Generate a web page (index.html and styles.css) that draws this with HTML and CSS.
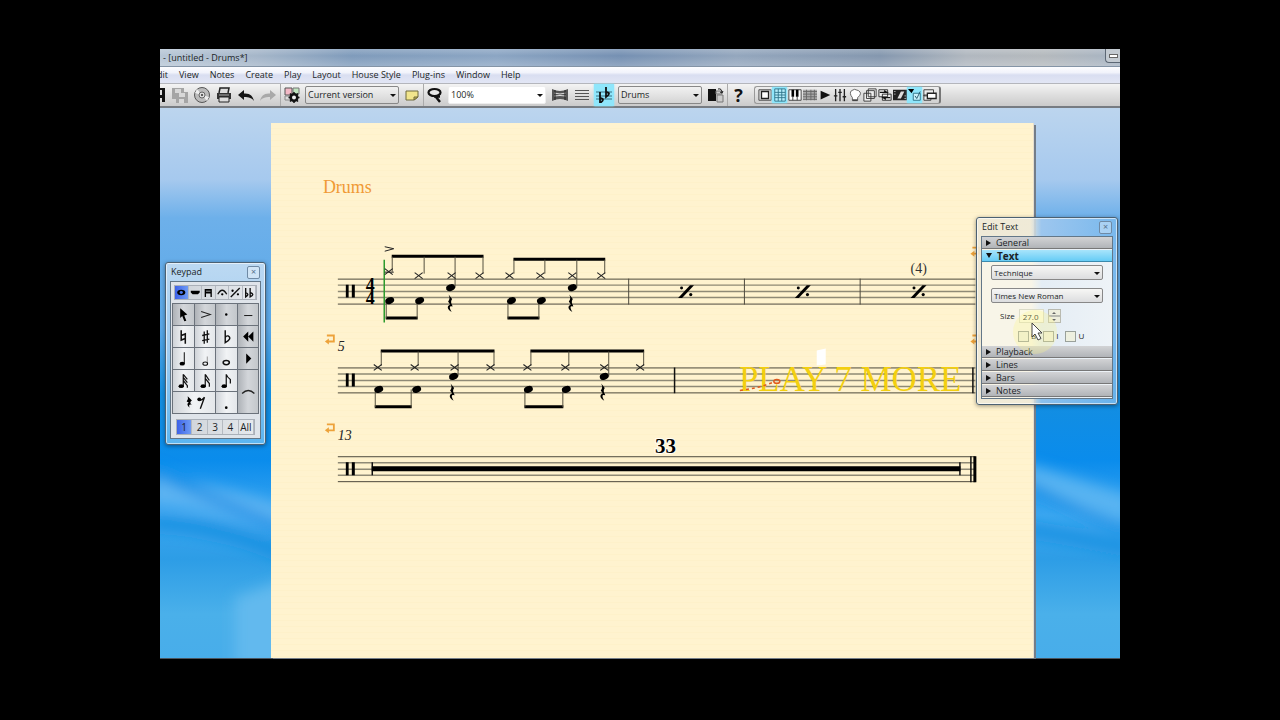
FILE: index.html
```html
<!DOCTYPE html>
<html lang="en">
<head>
<meta charset="utf-8">
<title>[untitled - Drums*]</title>
<link rel="stylesheet" href="styles.css">
</head>
<body>
<svg class="defs" aria-hidden="true">
  <defs>
    <g id="x"><path d="M-4-3 4 3M-4 3 4-3" stroke="#222" stroke-width="1.1" fill="none"/></g>
    <g id="head"><ellipse rx="4.6" ry="3.3" transform="rotate(-22)"/></g>
    <g id="rest"><path d="M-2-9 1.500-4.500Q-.5-1.500 1.500 1.500L2 3Q-3 1.500 1 8.500-4 5.500-2.500 2.500L-.5 1-2.500-2Q0-4.500-2-9Z"/></g>
    <g id="repeat"><path d="M-8 6.500h4L8-6.500H4Z"/><circle cx="-4.500" cy="-3.500" r="1.500"/><circle cx="4.700" cy="3" r="1.600"/></g>
    <g id="clef"><path d="M0 0h2.800v13H0zM6 0h3v13H6z"/></g>
    <g id="break"><path d="M2 1h7v6H3" fill="none" stroke="#eda23a" stroke-width="1.800"/><path d="M0 7l4-3v6z" fill="#eda23a"/></g>
  </defs>
</svg>

<div class="app">
  <header class="titlebar">
    <span>- [untitled - Drums*]</span>
    <button class="minimise" aria-label="Minimise"><i></i></button>
  </header>

  <nav class="menubar">
    <button class="cut">Edit</button><button>View</button><button>Notes</button><button>Create</button><button>Play</button><button>Layout</button><button>House Style</button><button>Plug-ins</button><button>Window</button><button>Help</button>
  </nav>

  <div class="toolbar">
    <div class="group files">
      <button class="half" aria-label="Save"><svg viewBox="0 0 6 16" width="6" height="16"><path d="M0 1h5v14H0z" fill="#111"/><path d="M0 3h2v5H0zM0 11h2v4H0z" fill="#ddd"/></svg></button>
      <button aria-label="Save all"><svg viewBox="0 0 16 16"><path d="M0 1h12v11H0zM4 5h12v11H4z" fill="#a5a5a5"/><path d="M3 2h6v4H3zM7 6h6v4H7zM7 12h5v4H7z" fill="#d8d8d8"/></svg></button>
      <button aria-label="Export audio"><svg viewBox="0 0 16 16"><circle cx="8" cy="8" r="7.500" fill="#bbb" stroke="#555"/><path d="M8 8 3 2 1 6zM8 8l5 6 2-4z" fill="#eee"/><circle cx="8" cy="8" r="3" fill="#ddd" stroke="#666"/><circle cx="8" cy="8" r="1" fill="#333"/></svg></button>
      <button aria-label="Print"><svg viewBox="0 0 16 16"><path d="M3 6 4 1h9l-1 5" fill="#ddd" stroke="#222" stroke-width="1.500"/><path d="M1 6h14v6H1z" fill="#333"/><path d="M3 10h10v5H3z" fill="#ddd" stroke="#222"/><path d="M3 8h10" stroke="#aaa"/></svg></button>
      <button aria-label="Undo"><svg viewBox="0 0 16 16"><path d="M0 8l6-5v3.500c6-.5 9 2.500 10 7.500-2-3-5-4-10-4V13z" fill="#151515"/></svg></button>
      <button aria-label="Redo"><svg viewBox="0 0 16 16"><path d="M16 8l-6-5v3.500C4 6 1 9 0 14c2-3 5-4 10-4V13z" fill="#a9a9a9"/></svg></button>
    </div>
    <div class="group">
      <button aria-label="New version"><svg viewBox="0 0 16 16"><path d="M1 1h7v7H1z" fill="#f3b9c6" stroke="#555"/><path d="M9 1h6v6H9z" fill="#bfe3be" stroke="#777"/><path d="M1 9h6v4H1z" fill="#ddd" stroke="#888"/><circle cx="10" cy="10.500" r="3.300" fill="#eee" stroke="#111" stroke-width="2.600"/><path d="M10 5v2M10 14v2M4.500 10.500h2M13.500 10.500h2M6 6.500l1.500 1.500M14 14.500l-1.500-1.500M14 6.500 12.500 8M6 14.500l1.500-1.500" stroke="#111" stroke-width="1.500"/></svg></button>
      <span class="drop version"><select aria-label="Version"><option>Current version</option></select></span>
      <button aria-label="Comment"><svg viewBox="0 0 16 16"><path d="M2 4h12v6l-4 3H2z" fill="#f1e58c" stroke="#6f6a3c"/><path d="M14 10h-4v3z" fill="#c9b84e" stroke="#6f6a3c"/></svg></button>
    </div>
    <div class="group">
      <button aria-label="Zoom tool"><svg viewBox="0 0 16 16"><ellipse cx="7.500" cy="5.500" rx="6" ry="3.500" fill="#e8e8e8" stroke="#111" stroke-width="2.200"/><path d="M7 9.500h6M9 10l4 5" stroke="#111" stroke-width="2.500"/></svg></button>
      <span class="drop zoom"><select aria-label="Zoom"><option>100%</option></select></span>
    </div>
    <div class="group views">
      <button aria-label="Panorama"><svg viewBox="0 0 16 16"><path d="M0 2q8 4 16 0v12q-8-4-16 0z" fill="#555"/><path d="M2 6q6 2 12 0M2 9q6-1 12 0" stroke="#ddd" fill="none"/><path d="M3 3v10M13 3v10" stroke="#222"/></svg></button>
      <button aria-label="Staves"><svg viewBox="0 0 16 16"><path d="M1 3.500h14M1 6.500h14M1 9.500h14M1 12.500h14" stroke="#555"/></svg></button>
      <button class="on transpose" aria-label="Transposing score"><svg viewBox="0 0 16 16"><path d="M0 5h16M0 9h16M0 12h16" stroke="#397182"/><path d="M4 5v11q6-4 0-5M10 0v10q6-4 0-5" fill="none" stroke="#111" stroke-width="1.800"/></svg></button>
      <span class="drop part"><select aria-label="Part"><option>Drums</option></select></span>
      <button aria-label="Switch part"><svg viewBox="0 0 16 16"><path d="M0 2h8v12H0z" fill="#111"/><path d="M8 4h6v3H8zM9 8h6v7H9z" fill="#ccc" stroke="#777"/><path d="M10 2q4-1 4 4l-2-1m2 1 1-2" fill="none" stroke="#222"/></svg></button>
    </div>
    <div class="group">
      <button class="help" aria-label="Help">?</button>
      <div class="windows">
        <button aria-label="Navigator"><svg viewBox="0 0 16 16"><path d="M1 2h14v12H1z" fill="#ddd" stroke="#444"/><path d="M4 4h8v8H4z" fill="#fff" stroke="#222" stroke-width="1.500"/></svg></button>
        <button class="on" aria-label="Keypad window"><svg viewBox="0 0 16 16"><path d="M2 1h12v14H2zM6 1v14M10 1v14M2 5h12M2 8h12M2 11h12" fill="#b5eefb" stroke="#2c7288"/></svg></button>
        <button aria-label="Keyboard"><svg viewBox="0 0 16 16"><path d="M1 2h14v12H1z" fill="#fff" stroke="#333"/><path d="M4 2h3v8H4zM9 2h3v8H9z"/><path d="M5.500 9v5M10.500 9v5" stroke="#333"/></svg></button>
        <button aria-label="Fretboard"><svg viewBox="0 0 16 16"><path d="M0 2h16v12H0z" fill="#aaa"/><path d="M0 4h16M0 7h16M0 10h16M0 13h16M4 2v12M9 2v12M13 2v12" stroke="#666"/></svg></button>
        <button aria-label="Playback"><svg viewBox="0 0 16 16"><path d="M3 3l11 5-11 5z" fill="#111"/></svg></button>
        <button aria-label="Mixer"><svg viewBox="0 0 16 16"><path d="M3 1v14M8 1v14M13 1v14M1 9h4M6 5h4M11 10h4" stroke="#222" stroke-width="1.500"/></svg></button>
        <button aria-label="Ideas"><svg viewBox="0 0 16 16"><path d="M5 11Q1 6 4 3t8 0-1 8v3H5z" fill="#fff" stroke="#555"/><path d="M5 13h6v2H5z" fill="#444"/></svg></button>
        <button aria-label="Parts"><svg viewBox="0 0 16 16"><path d="M6 1h9v9H6zM4 3h9v9H4zM1 6h8v9H1z" fill="#eee" stroke="#333"/></svg></button>
        <button aria-label="Compare"><svg viewBox="0 0 16 16"><path d="M1 2h10v8H1zM5 7h10v7H5z" fill="#eee" stroke="#222"/><path d="M2 5h8l-3-2M14 11H6l3 2" stroke="#111" fill="none" stroke-width="1.500"/></svg></button>
        <button aria-label="Video"><svg viewBox="0 0 16 16"><path d="M0 2h16v12H0z" fill="#222"/><path d="M5 12 9 4h4l-4 8z" fill="#ddd"/><path d="M1 4h2M1 7h2M13 9h2M13 12h2" stroke="#aaa"/></svg></button>
        <button class="on" aria-label="Properties"><svg viewBox="0 0 16 16"><path d="M0 1h7L4 6z"/><path d="M6 6h8v8H6z" fill="#c9f3fd" stroke="#266a80"/><path d="M8 9l2 3 4-8" fill="none" stroke="#17485a"/></svg></button>
        <button aria-label="Hide windows"><svg viewBox="0 0 16 16"><path d="M1 2h11v7H1zM1 8h8v6H1z" fill="#eee" stroke="#333"/><path d="M5 6h10v6H5z" fill="#fff" stroke="#222" stroke-width="1.500"/></svg></button>
      </div>
    </div>
  </div>

  <main class="workspace">
    <svg class="wallpaper" viewBox="0 0 960 550" preserveAspectRatio="none" aria-hidden="true">
      <defs><filter id="soft" x="-20%" y="-50%" width="140%" height="200%"><feGaussianBlur stdDeviation="7"/></filter></defs>
      <g filter="url(#soft)" fill="none">
        <path d="M-10 384Q50 386 120 412" stroke="#5db4f2" stroke-width="26"/>
        <path d="M-10 362Q55 392 120 420" stroke="#168fe6" stroke-width="9"/>
        <path d="M-10 415Q60 417 125 446" stroke="#188ee0" stroke-width="12"/>
        <path d="M75 560V490L130 470V560z" fill="#62b9ee"/>
        <path d="M860 368Q910 382 970 402" stroke="#58b4f2" stroke-width="26"/>
        <path d="M860 372Q900 396 970 424" stroke="#178fe4" stroke-width="8"/>
        <path d="M860 420Q920 430 970 440" stroke="#188ee0" stroke-width="10"/>
      </g>
    </svg>

    <article class="paper">
      <svg class="score" viewBox="271 123 763 535" role="img" aria-label="Drum score">
        <text class="part-name" x="323" y="193">Drums</text>

        <g class="staff">
          <path d="M338 279.500H977M338 304.500H977"/>
          <path class="mid" d="M338 285.500H977M338 292H977M338 298H977"/>
          <path d="M629.500 279v26M745.500 279v26M861.500 279v26"/>
        </g>
        <use href="#clef" x="346" y="285"/>
        <text class="time" x="366" y="291">4</text>
        <text class="time" x="366" y="304">4</text>
        <path d="M384.500 260v63" stroke="#2c9a2c" stroke-width="1.500"/>
        <path d="M385 247l9 2-9 2.500" fill="none" stroke="#222"/>
        <path d="M392 255h92v3h-92zM514 258h92v3h-92zM386 317h32v3h-32zM508 317h32v3h-32z"/>
        <path class="stem" d="M392.500 257v15M424.500 257v17M455.500 257v31M483.500 257v17M514.500 260v14M545.500 260v14M577.500 260v28M605.500 260v14M386.500 301v18M417.500 301v18M508.500 301v18M539.500 301v18"/>
        <path d="M385 272.500h9" stroke="#222"/>
        <use href="#x" x="389" y="272"/><use href="#x" x="419" y="276"/><use href="#x" x="452" y="276"/><use href="#x" x="480" y="276"/>
        <use href="#x" x="510" y="276"/><use href="#x" x="541" y="276"/><use href="#x" x="573" y="276"/><use href="#x" x="602" y="276"/>
        <use href="#head" x="451" y="288"/><use href="#head" x="573" y="288"/>
        <use href="#head" x="390" y="301"/><use href="#head" x="420" y="301"/><use href="#head" x="512" y="301"/><use href="#head" x="542" y="301"/>
        <use href="#rest" x="451" y="304"/><use href="#rest" x="572" y="304"/>
        <use href="#repeat" x="687" y="292"/><use href="#repeat" x="804" y="292"/><use href="#repeat" x="920" y="292"/>
        <text class="count" x="912" y="273">(4)</text>
        <use href="#break" x="972" y="247"/>

        <use href="#break" x="325" y="335"/>
        <text class="bar-no" x="338" y="352">5</text>
        <g class="staff">
          <path d="M338 368.500H977M338 393.500H977"/>
          <path class="mid" d="M338 374.500H977M338 381H977M338 387H977"/>
          <path class="firm" d="M675.500 368v26M974.500 368v26"/>
        </g>
        <use href="#clef" x="346" y="374"/>
        <path d="M381 350h114v3H381zM531 350h114v3H531zM375 406h37v3h-37zM525 406h39v3h-39z"/>
        <path class="stem" d="M381.500 352v14M418.500 352v14M458.500 352v25M494.500 352v14M531.500 352v14M569.500 352v14M609.500 352v25M644.500 352v14M375.500 390v18M411.500 390v18M525.500 390v18M563.500 390v18"/>
        <use href="#x" x="378" y="368"/><use href="#x" x="415" y="368"/><use href="#x" x="455" y="368"/><use href="#x" x="491" y="368"/>
        <use href="#x" x="528" y="368"/><use href="#x" x="566" y="368"/><use href="#x" x="605" y="368"/><use href="#x" x="641" y="368"/>
        <use href="#head" x="454" y="377"/><use href="#head" x="605" y="377"/>
        <use href="#head" x="379" y="390"/><use href="#head" x="417" y="390"/><use href="#head" x="529" y="390"/><use href="#head" x="567" y="390"/>
        <use href="#rest" x="453" y="393"/><use href="#rest" x="604" y="393"/>
        <path d="M818 351l9-2v16l-9 1z" fill="#fff"/>
        <text class="technique" x="740" y="392">PLAY 7 MORE</text>
        <path d="M741 391q18-2 33-8" fill="none" stroke="#e05a1c" stroke-width="1.500" stroke-dasharray="3 3"/>
        <ellipse cx="778" cy="382" rx="3" ry="1.800" fill="none" stroke="#e05a1c" stroke-width="1.500"/>
        <use href="#break" x="972" y="335"/>

        <use href="#break" x="325" y="424"/>
        <text class="bar-no" x="338" y="441">13</text>
        <g class="staff">
          <path d="M338 457.500H977M338 482.500H977"/>
          <path class="mid" d="M338 463.500H977M338 470H977M338 476H977"/>
          <path class="firm" d="M372.500 463v13M961.500 463v13M972.500 457v26"/>
        </g>
        <use href="#clef" x="346" y="463"/>
        <path d="M372 467h590v5H372zM975 457h3v26h-3z"/>
        <text class="rests" x="656" y="454">33</text>
      </svg>
    </article>

    <section class="panel keypad" aria-label="Keypad">
      <header><h2>Keypad</h2><button class="close" aria-label="Close keypad">×</button></header>
      <div class="body">
        <div class="tabs">
          <button class="sel" aria-label="Common notes"><svg viewBox="0 0 14 12"><ellipse cx="7" cy="6" rx="4.500" ry="3"/><ellipse cx="7" cy="6" rx="1.800" ry="1.600" fill="#4c78ee"/></svg></button>
          <button aria-label="More notes"><svg viewBox="0 0 14 12"><path d="M2 4h10v2l-2 2H4L2 6z"/></svg></button>
          <button aria-label="Beams"><svg viewBox="0 0 14 12"><path d="M3 2h8v2H3zM3 5h8v2H3zM3 2h1.500v9H3zM9.500 2H11v9H9.500z"/></svg></button>
          <button aria-label="Articulations"><svg viewBox="0 0 14 12"><path d="M2 8q5-9 10 0" fill="none" stroke="#111" stroke-width="1.500"/><circle cx="7" cy="8" r="1.300"/></svg></button>
          <button aria-label="Jazz articulations"><svg viewBox="0 0 14 12"><path d="M2 11 12 1" stroke="#111" stroke-width="1.500"/><circle cx="4" cy="4" r="1.300"/><circle cx="10" cy="8" r="1.300"/></svg></button>
          <button aria-label="Accidentals"><svg viewBox="0 0 14 12"><path d="M3 1v10q5-3 0-5M8 1v10q6-3 0-5" fill="none" stroke="#111" stroke-width="1.500"/></svg></button>
        </div>
        <div class="keys">
          <button class="dim" aria-label="Select"><svg viewBox="0 0 20 20"><path d="M7 4l7 6-3 1 2 5-2 .5-2-5-2 2z"/></svg></button>
          <button class="dim" aria-label="Accent"><svg viewBox="0 0 20 20"><path d="M6 7l9 3-9 3" fill="none" stroke="#222"/></svg></button>
          <button class="dim" aria-label="Staccato"><svg viewBox="0 0 20 20"><circle cx="10" cy="10" r="1.200"/></svg></button>
          <button class="dim" aria-label="Tenuto"><svg viewBox="0 0 20 20"><path d="M6 11h8" stroke="#222"/></svg></button>
          <button aria-label="Natural"><svg viewBox="0 0 20 20"><path d="M8 4v9.500L12 12M12 17V7.500L8 9" fill="none" stroke="#111" stroke-width="1.500"/></svg></button>
          <button aria-label="Sharp"><svg viewBox="0 0 20 20"><path d="M9 5v12M12 4v12M7 9l7-1.500M7 14l7-1.500" fill="none" stroke="#111" stroke-width="1.300"/></svg></button>
          <button aria-label="Flat"><svg viewBox="0 0 20 20"><path d="M9 4v12q7-4 3-6.500Q10 9 9 11" fill="none" stroke="#111" stroke-width="1.400"/></svg></button>
          <button class="dim" aria-label="Rewind"><svg viewBox="0 0 20 20"><path d="M10 5v10l-5-5zM15 5v10l-5-5z"/></svg></button>
          <button aria-label="Quarter note"><svg viewBox="0 0 20 20"><path d="M11 4v11" stroke="#111"/><ellipse cx="9" cy="15" rx="2.600" ry="1.800"/></svg></button>
          <button aria-label="Half note"><svg viewBox="0 0 20 20"><path d="M12 8v7" stroke="#999"/><ellipse cx="10" cy="15" rx="2.300" ry="1.500" fill="none" stroke="#111"/></svg></button>
          <button aria-label="Whole note"><svg viewBox="0 0 20 20"><ellipse cx="10" cy="14" rx="3" ry="2" fill="none" stroke="#111" stroke-width="1.500"/></svg></button>
          <button class="dim" aria-label="Play"><svg viewBox="0 0 20 20"><path d="M8 5l5 5-5 5z"/></svg></button>
          <button aria-label="32nd note"><svg viewBox="0 0 20 20"><path d="M10 4v12M10 4l4 5M10 7l4 5M10 10l4 5v2" stroke="#111" fill="none" stroke-width="1.200"/><ellipse cx="8" cy="15.500" rx="2.600" ry="1.800"/></svg></button>
          <button aria-label="16th note"><svg viewBox="0 0 20 20"><path d="M10 4v12M10 4l4 6M10 8l4 5v3" stroke="#111" fill="none" stroke-width="1.200"/><ellipse cx="8" cy="15.500" rx="2.600" ry="1.800"/></svg></button>
          <button aria-label="Eighth note"><svg viewBox="0 0 20 20"><path d="M10 4v12M10 4q1 3 4 5v4" stroke="#111" fill="none" stroke-width="1.200"/><ellipse cx="8" cy="15.500" rx="2.600" ry="1.800"/></svg></button>
          <button class="dim tall" aria-label="Tie"><svg viewBox="0 0 20 20"><path d="M4 12q6-6 12 0" fill="none" stroke="#222" stroke-width="1.300"/></svg></button>
          <button class="wide" aria-label="Rest"><svg viewBox="0 0 40 20"><path d="M14 4l4 4q-3 2 0 4-4-1-2 3-4-3-1-5l-2-1q2-2 1-5Z"/><circle cx="25" cy="7" r="1.800"/><path d="M24 8q4 0 6-3l-4 11" fill="none" stroke="#111" stroke-width="1.300"/></svg></button>
          <button aria-label="Dot"><svg viewBox="0 0 20 20"><circle cx="10" cy="15" r="1.300"/></svg></button>
        </div>
        <div class="voices">
          <button class="sel">1</button><button>2</button><button>3</button><button>4</button><button>All</button>
        </div>
      </div>
    </section>

    <section class="panel edit" aria-label="Edit Text">
      <header><h2>Edit Text</h2><button class="close" aria-label="Close properties">×</button></header>
      <div class="body">
        <button class="fold">General</button>
        <button class="fold open">Text</button>
        <div class="fields">
          <span class="drop"><select aria-label="Text style"><option>Technique</option></select></span>
          <span class="drop"><select aria-label="Font"><option>Times New Roman</option></select></span>
          <div class="size">
            <label for="size">Size</label><input id="size" type="text" value="27.0">
            <span class="spin"><button aria-label="Larger"></button><button class="down" aria-label="Smaller"></button></span>
          </div>
          <div class="checks">
            <label><input type="checkbox">B</label><label><input type="checkbox">I</label><label><input type="checkbox">U</label>
          </div>
          <svg class="pointer" viewBox="0 0 44 44" aria-hidden="true"><circle cx="22" cy="22" r="22" fill="#fbf58a" opacity=".3"/><path d="M19 13v14l3-3 3 6 3-1.500-3-5.500h4z" fill="#fff" stroke="#444"/></svg>
        </div>
        <button class="fold">Playback</button>
        <button class="fold">Lines</button>
        <button class="fold">Bars</button>
        <button class="fold">Notes</button>
      </div>
    </section>
  </main>
</div>
</body>
</html>
```
FILE: styles.css
```css
* { box-sizing: border-box; }
body {
  margin: 0;
  min-height: 100vh;
  padding: 49px 12.5% 61px;
  display: flex;
  background: #000;
  color: #1b1f26;
  font: 9px/12px "Open Sans", "Noto Sans", sans-serif;
}
button, select, input { font: inherit; color: inherit; margin: 0; }
button { padding: 0; border: 0; background: none; display: flex; align-items: center; justify-content: center; }
h2 { margin: 0; font-size: 9px; font-weight: 400; }
.defs { position: absolute; width: 0; height: 0; }

.app { flex: 1; min-width: 0; display: flex; flex-direction: column; overflow: hidden; }

.titlebar {
  height: 18px;
  padding-left: 3px;
  display: flex;
  align-items: center;
  justify-content: space-between;
  background: linear-gradient(#fff3, #fff0 40%, #fff3), linear-gradient(90deg, #b7c6d6, #a5b6c9 10%, #7f9bbb 20%, #8ba5c3 35%, #7590b2 48%, #93a6bd 60%, #8497ae 75%, #b0b7bf 84%, #b4b9bd 92%, #a6b3c2);
  border-bottom: 1px solid #8494a6;
}
.minimise { align-self: flex-start; width: 15px; height: 14px; border: 1px solid #5c6774; border-width: 0 0 1px 1px; border-radius: 0 0 0 4px; background: #c3cad1; }
.minimise i { width: 9px; height: 4px; border: 1px solid #666; background: #fff; }

.menubar {
  height: 16px;
  display: flex;
  gap: 11px;
  background: linear-gradient(#fdfdff, #f1f3fb 35%, #d9def1 50%, #e2e6f5);
}
.menubar .cut { margin-left: -8px; }

.toolbar {
  height: 25px;
  display: flex;
  align-items: center;
  background: linear-gradient(#f4f4f4, #dedede 50%, #cbcbcb);
  border-top: 1px solid #b4b6bc;
  border-bottom: 2px solid #777c82;
}
.group { height: 100%; display: flex; align-items: center; gap: 5px; padding: 0 3px; border-left: 1px solid #aaa; flex: none; }
.group svg { width: 16px; height: 16px; display: block; }
.files { gap: 6px; padding: 0 4px 0 0; border: 0; }
.files .half svg { width: 6px; }
.on { align-self: stretch; background: #8fe6fb; box-shadow: 0 0 2px #8fe6fb; }
.transpose { padding: 0 2px; margin: 0 -2px; }
.help { width: 15px; font-size: 18px; font-weight: 700; color: #111; }
.windows { display: flex; padding: 0 2px; border: 1px solid #999; border-right: 2px solid #777; border-radius: 3px; height: 18px; margin-left: 3px; }
.windows button { width: 15px; }
.windows svg { width: 14px; height: 14px; }

.drop { position: relative; display: block; }
.drop select {
  appearance: none;
  display: block;
  width: 100%;
  height: 18px;
  padding: 0 2px;
  border: 1px solid #888;
  border-radius: 2px;
  background: linear-gradient(#f1f1f1, #e3e3e3 50%, #d4d4d4);
}
.drop::after { content: ""; position: absolute; right: 3px; top: 50%; margin-top: -1px; border: 3px solid transparent; border-top-color: #111; border-bottom: 0; pointer-events: none; }
.version { width: 94px; }
.zoom { width: 98px; }
.zoom select { background: #fff; border-color: #eee; }
.part { width: 84px; }

.views { gap: 6px; border: 0; }

.workspace {
  position: relative;
  flex: 1;
  display: flex;
  padding: 15px 9% 0 11.6%;
  border-bottom: 1px solid #4a5560;
  background: linear-gradient(#bcd5ee, #a6c9ee 13%, #6db0ea 20%, #5aa8e8 40%, #148ee0 52%, #0a8cec 64%, #3ba6f0 74%, #2d9de6 82%, #4ab0ea 92%, #48adea);
}
.wallpaper { position: absolute; inset: 0; width: 100%; height: 100%; }
.paper {
  position: relative;
  flex: 1;
  background: repeating-linear-gradient(#fff3cf 0 5px, #fef1ca 5px 6px);
  border-right: 1px solid #e6dfcf;
  box-shadow: 2px 2px 0 #747d88;
}
.score { display: block; width: 100%; height: auto; font-family: "Liberation Serif", serif; }
.staff { fill: none; stroke: #4c483c; stroke-width: 1; }
.staff .mid { stroke: #8f8a76; stroke-width: 1.5; }
.staff .firm { stroke: #111; stroke-width: 1.5; }
.stem { stroke: #55503f; fill: none; }
.part-name { font-size: 18px; fill: #f09a35; }
.time { font-size: 18px; font-weight: 700; }
.count { font-size: 14px; fill: #333; }
.bar-no { font-size: 14px; font-style: italic; fill: #222; }
.technique { font-size: 35px; fill: #f3cf10; }
.rests { font-size: 21px; font-weight: 700; paint-order: stroke; stroke: #fffdf6; stroke-width: 2px; }

.panel {
  position: absolute;
  padding: 0 4px 5px;
  border: 1px solid #4c6172;
  border-radius: 3px;
  box-shadow: inset 0 0 0 1px #ffffff99, 0 1px 4px #0006;
}
.panel header { height: 18px; padding: 0 1px; display: flex; align-items: center; justify-content: space-between; }
.panel .close { width: 13px; height: 13px; border: 1px solid #6f8aa5; border-radius: 2px; background: #ffffff55; color: #56708a; line-height: 10px; }
.panel .body { border: 1px solid #637788; }

.keypad { left: 5px; top: 154px; width: 101px; background: linear-gradient(#bcd9f2, #9dcaf0 50%, #5bb5f0); }
.keypad .body { background: #dfe4ea; padding: 3px 1px; }
.keypad svg { display: block; width: 100%; height: 100%; }
.tabs, .voices { display: flex; height: 15px; border: 1px solid #aab0b8; background: linear-gradient(90deg, #cdd2d8, #e6e9ed); }
.tabs { margin: 0 2px 3px; }
.tabs button, .voices button { flex: 1; min-width: 0; border-right: 1px solid #b5bac1; }
.tabs .sel, .voices .sel { background: linear-gradient(90deg, #3d62e8, #6f9bf5); }
.keys { display: grid; grid-template-columns: repeat(4, 1fr); grid-auto-rows: 21px; gap: 1px; background: #6b727b; border: 1px solid #6b727b; }
.keys button { background: linear-gradient(90deg, #cfd3d8, #f1f3f5 50%, #e4e7ea); padding: 0; }
.keys .dim { background: linear-gradient(90deg, #aeb2b7, #d3d6da 50%, #c3c7cb); }
.keys .tall { grid-row: span 2; }
.keys .wide { grid-column: span 2; }
.voices { margin: 5px 4px 0; height: 16px; font-size: 10px; }

.edit { right: 2px; top: 109px; width: 142px; background: linear-gradient(90deg, #eee9d8e6 0 38%, #a9ccefcc 46%, #7dbbeecc); }
.edit .body { background: linear-gradient(90deg, #f8f5e8 0 38%, #e4edf5 46%, #eef3f7); }
.edit .body, .edit .fields { position: relative; }
.fold {
  width: 100%;
  height: 12px;
  margin-bottom: 1px;
  padding-left: 4px;
  justify-content: flex-start;
  gap: 5px;
  border-bottom: 1px solid #777;
  background: linear-gradient(#d2d3d5, #b1b4b8);
}
.fold::before { content: ""; border: 3px solid transparent; border-left: 5px solid #111; border-right: 0; }
.fold.open { font-size: 10px; font-weight: 700; background: linear-gradient(#a8e4fb, #66ccf5); border-color: #3b8aad; }
.fold.open::before { border: 3px solid transparent; border-top: 5px solid #111; border-bottom: 0; }
.fields { height: 83px; padding: 2px 9px 0; font-size: 8px; }
.fields .drop { margin-bottom: 8px; }
.fields .drop select { height: 15px; background: linear-gradient(#f7f7f5, #dcdddf); }
.size { display: flex; align-items: center; gap: 4px; padding-left: 9px; margin-top: -2px; }
.size input { width: 25px; height: 14px; padding: 0 3px; border: 1px solid #dcdcc8; background: #fbf9e4; }
.spin { display: grid; grid-template-rows: 7px 7px; width: 13px; }
.spin button { border: 1px solid #b9bab0; background: #eeeedd; }
.spin button::after { content: ""; border: 2px solid transparent; border-bottom-color: #666; border-top: 0; }
.spin .down::after { border: 2px solid transparent; border-top-color: #666; border-bottom: 0; }
.checks { display: flex; gap: 7px; padding-left: 27px; margin-top: 7px; }
.checks label { display: flex; align-items: center; gap: 2px; }
.checks input { appearance: none; width: 11px; height: 11px; border: 1px solid #9aa19b; background: #eef0e0; }
.pointer { position: absolute; left: 31px; top: 47px; width: 44px; height: 44px; pointer-events: none; }
```
